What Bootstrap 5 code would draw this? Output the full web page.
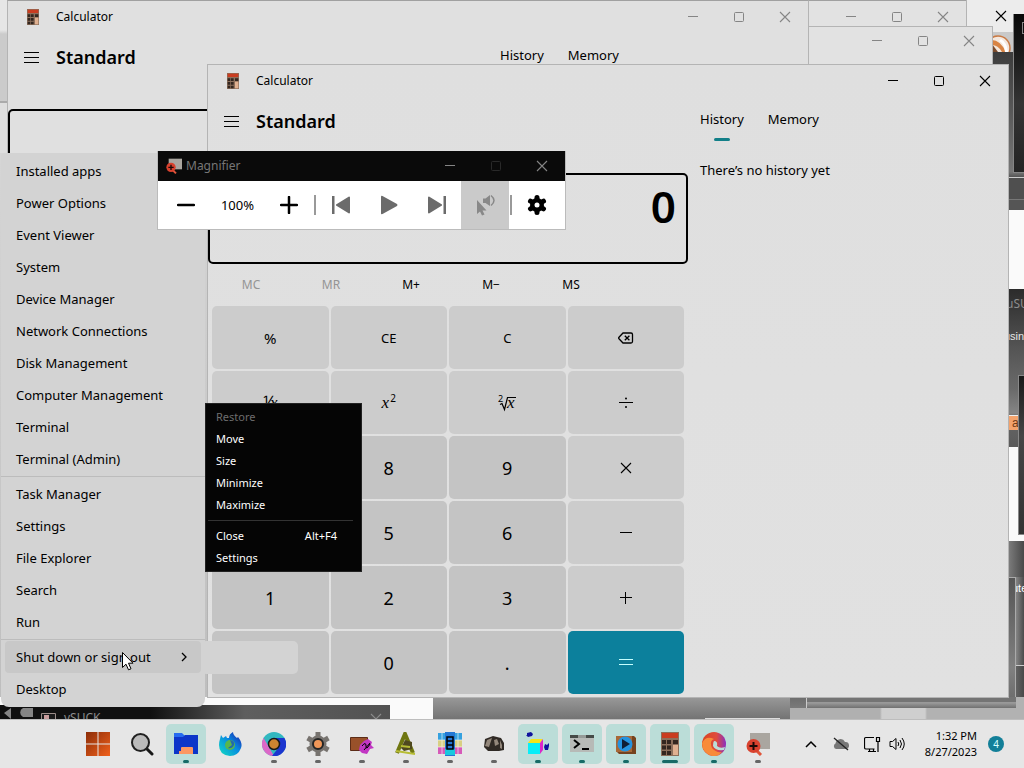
<!DOCTYPE html>
<html lang="en">
<head>
<meta charset="utf-8">
<meta name="viewport" content="width=device-width, initial-scale=1">
<title>Desktop</title>
<link href="https://cdn.jsdelivr.net/npm/bootstrap@5.3.0/dist/css/bootstrap.min.css" rel="stylesheet">
<style>
  body { font-family: "Noto Sans", "Open Sans", sans-serif; font-size: 13px; line-height: 18px; color: #000; background: #707070; }
  button { font: inherit; color: inherit; border: 0; background: none; padding: 0; }
  svg { display: block; flex: none; }
  .ink { fill: none; stroke: currentColor; }

  .desktop { background: linear-gradient(#dcdcdc, #bdbdbd); }
  .pane { position: absolute; }
  .window { position: absolute; background: #e0e0e0; border: 1px solid #b4b4b4; }
  .titlebar { height: 32px; }
  .win-name { font-size: 12px; }
  .win-btn { width: 46px; height: 32px; display: flex; align-items: center; justify-content: center; }
  .inactive .win-btn { color: #858585; }

  /* windows behind the calculators */
  .edge-strip { left: 0; top: 0; width: 8px; height: 153px; background: linear-gradient(#e6e6e6 0 30px, #cbcbcb 34px 101px, #aaa 101px 103px, #dedede 103px); }
  .ghost-a { left: 808px; top: -2px; width: 159px; height: 40px; background: #e2e2e2; }
  .ghost-a .inner-top { border-top: 1px solid #a0a0a0; margin-top: 1px; }
  .ghost-b { left: 808px; top: 26px; width: 185px; height: 50px; background: #e2e2e2; }
  .ghost-b .win-btn { height: 28px; }
  .right-top { left: 967px; top: 0; right: 0; height: 32px; background: #ececec; }
  .right-logo { left: 992px; top: 32px; width: 21px; height: 20px; background: #c9c9c9; overflow: hidden; }
  .right-dark { left: 992px; top: 52px; right: 0; height: 158px; background: linear-gradient(#3c3c3c, #777 120px, #555 125px, #686868); }
  .right-black { left: 1013px; top: 14px; right: 0; height: 159px; background: linear-gradient(#080808, #343434 90px, #242424); border: 1px solid #858585; border-right: 0; border-top: 0; overflow: hidden; }
  .right-box { width: 16px; height: 12px; margin: 8px 0 0 8px; border: 1px solid #888; }
  .right-black2 { left: 1008px; top: 177px; right: 0; height: 33px; background: linear-gradient(#4f4f4f 0 21px, #777 21px 22px, #555 22px); border-top: 1px solid #ccc; }
  .right-white { left: 1008px; top: 210px; right: 0; height: 331px; background: #fafafa; }
  .right-term { left: 1008px; top: 289px; right: 0; height: 158px; background: linear-gradient(#2b2b2b, #555 60px, #6a6a6a 100px, #858585 124px, #666 128px, #5a5a5a); color: #e6e6e6; overflow: hidden; white-space: nowrap; }
  .right-term .dim { color: #8d8d8d; font-size: 12px; margin-top: 6px; margin-left: -2px; }
  .right-term .lit { font: 11px/16px "Liberation Sans", sans-serif; margin-top: 15px; margin-left: -4px; }
  .right-tag { left: 1008px; top: 415px; width: 11px; height: 15px; background: #f3a36d; color: #6f3a16; border-top: 1px solid #eee; font: 12px/14px "Liberation Sans", sans-serif; padding-left: 4px; overflow: hidden; }
  .right-slab { left: 1018px; top: 375px; right: 0; height: 160px; background: linear-gradient(#191919, #454545 60px, #333); border: 1px solid #888; border-right: 0; }
  .right-low { left: 1008px; top: 541px; right: 0; height: 156px; background: linear-gradient(90deg, #7e7e7e, #484848); }
  .right-frame { left: 790px; top: 577px; right: 8px; height: 131px; background: linear-gradient(#555, #808080 90px, #6e6e6e 120px, #7a7a7a); border-top: 1px solid #aaa; border-right: 1px solid #aaa; }
  .right-note { left: 1016px; top: 577px; right: 0; height: 89px; border-bottom: 1px solid #ccc; color: #fff; font: 11px/16px "Liberation Sans", sans-serif; padding-top: 3px; overflow: hidden; background: linear-gradient(90deg, #858585, #4b4b4b); }
  .right-note span { margin-left: -4px; }
  .bottom-strip { left: 0; right: 0; top: 697px; bottom: 0; background: linear-gradient(90deg, #fafafa 0 433px, #8a8a8a 433px 790px, #b0b0b0 790px 880px, #cfcfcf 882px 925px, #b2b2b2 927px); }
  .bottom-haze { left: 433px; width: 357px; top: 697px; bottom: 0; background: linear-gradient(#999, #727272); }
  .bottom-box { left: 705px; width: 75px; top: 718px; bottom: 0; border: 1px solid #ddd; border-bottom: 0; }
  .bottom-frame { left: 806px; right: 8px; top: 697px; height: 11px; background: linear-gradient(#747474 0 5px, #999 5px 6px, #707070); border-left: 1px solid #ccc; }
  .bottom-app { left: 0; width: 390px; top: 705px; bottom: 0; background: linear-gradient(90deg, #101010 150px, #5e5e5e 245px, #525252); overflow: hidden; color: #8c8c8c; font-size: 12px; }

  /* calculator */
  .calc { width: 802px; }
  .calc-back { left: 7px; top: 0; height: 200px; border-top-color: #a0a0a0; }
  .calc-front { left: 207px; top: 64px; background: linear-gradient(#dfdfdf, #e1e1e1); }
  .calc-left { width: 480px; }
  .app-icon { margin-left: 17px; margin-right: 15px; }
  .mode-row { height: 48px; }
  .mode-name { font-size: 18px; line-height: 24px; font-weight: 600; }
  .display-box { display: block; width: 480px; height: 91px; margin-top: 28px; border: 2px solid #000; border-radius: 5px; background: transparent; font-size: 44px; line-height: 60px; font-weight: 600; text-align: right; padding: 1px 10px 26px; color: #000; }
  .mem-row { padding: 5px 3px 0; }
  .mem-row button { width: 80px; height: 32px; font-size: 12px; }
  .mem-row button:disabled { color: #949494; }
  .keypad { display: grid; grid-template-columns: repeat(4, 1fr); grid-auto-rows: 63px; gap: 2px; padding: 5px 4px 3px; }
  .key { background: #ccc; border-radius: 5px; display: flex; align-items: center; justify-content: center; font-size: 13px; }
  .key-percent { font-size: 15px; }
  .digit { background: #c4c4c4; font-size: 18px; }
  .key-equal { background: #0c809c; color: #c5ffff; }
  .maths { font: italic 17px/18px "Liberation Serif", serif; }
  .maths sup { font: 10px "Noto Sans", sans-serif; top: -6px; margin-left: 1px; }
  .tabs-row { padding-left: 12px; height: 48px; gap: 24px; }
  .tab-btn { position: relative; height: 44px; }
  .tab-btn.picked::after { content: ""; position: absolute; left: 14px; right: 14px; bottom: 0; height: 3px; border-radius: 2px; background: #127f88; }
  .history-note { padding: 16px 12px; }

  /* magnifier */
  .magnifier { left: 157px; top: 151px; width: 409px; background: #fff; border: 1px solid #bbb; border-top: 0; z-index: 3; }
  .magnifier .titlebar { height: 30px; background: #0a0a0a; color: #767676; }
  .magnifier .win-btn { height: 30px; color: #858585; }
  .tool-row { height: 48px; padding: 0 4px; }
  .tool-btn { width: 48px; height: 48px; display: flex; align-items: center; justify-content: center; }
  .tool-btn.stuck { background: #cacaca; }
  .tool-sep { width: 2px; height: 20px; background: #999; margin: 0 1px; }
  .muted { color: #6b6b6b; }

  /* start context menu */
  .start-menu { left: 1px; top: 153px; width: 204px; padding: 2px 4px; background: #d3d3d3; border-radius: 3px 3px 8px 8px; }
  .start-menu button { display: flex; align-items: center; width: 100%; height: 32px; padding: 0 11px; border-radius: 4px; text-align: left; }
  .start-menu .hot { background: #c8c8c8; }
  .menu-line { height: 3px; margin: 0 -4px; border: 0; opacity: 1; background: linear-gradient(transparent 1px, #bcbcbc 1px 2px, transparent 2px); }
  .flyout { left: 201px; top: 641px; width: 97px; height: 33px; background: #d3d3d3; border-radius: 5px; }

  .sys-menu { left: 205px; top: 403px; width: 157px; padding: 2px 0; background: #050505; color: #fff; border: 1px solid #222; }
  .sys-menu button { display: flex; width: 100%; height: 22px; align-items: center; justify-content: space-between; padding: 0 24px 0 10px; font-size: 11px; }
  .sys-menu button:disabled { color: #6d6d6d; }
  .sys-line { height: 1px; margin: 4px 8px 4px 2px; border: 0; background: #333; opacity: 1; }
  .cursor { left: 121px; top: 651px; }

  /* taskbar */
  .taskbar { height: 48px; background: #e6e6e6; box-shadow: 0 -1px #bdbdbd; padding-left: 78px; padding-right: 20px; position: relative; }
  .task-btn { position: relative; width: 40px; height: 40px; display: flex; align-items: center; justify-content: center; border-radius: 5px; }
  .task-btn.open { background: #bbddd8; }
  .task-btn.run::after { content: ""; position: absolute; left: 17px; bottom: 1px; width: 6px; height: 3px; border-radius: 2px; background: #666; }
  .task-btn.open::after { background: #176b67; }
  .task-btn.focus-app::after { left: 12px; width: 16px; }
  .tray-icon { margin-right: 15px; }
  .clock { font-size: 11px; line-height: 16px; width: 72px; margin-right: 11px; }
  .count { width: 16px; height: 16px; border-radius: 50%; background: #127f98; color: #d8ffff; font-size: 10px; line-height: 16px; }
</style>
</head>
<body class="vh-100 d-flex flex-column overflow-hidden">

<svg width="0" height="0" class="position-absolute" aria-hidden="true">
  <symbol id="i-min" viewBox="0 0 12 12"><path class="ink" d="M1 5.5h10"/></symbol>
  <symbol id="i-max" viewBox="0 0 12 12"><rect class="ink" x="1.5" y="1.5" width="9" height="9" rx="1"/></symbol>
  <symbol id="i-x" viewBox="0 0 12 12"><path class="ink" d="M1 1l10 10M11 1L1 11" stroke-width="1.1"/></symbol>
  <symbol id="i-burger" viewBox="0 0 16 12"><path class="ink" d="M0 1.500h15M0 6.500h15M0 11.500h15" stroke="#333"/></symbol>
  <symbol id="i-calc" viewBox="0 0 24 24">
    <path fill="#8c6f5b" d="M3 0h18v24H3z"/><path fill="#c93c20" d="M4 1h16v5H4z"/><path fill="#e0b090" d="M15 13h5v10h-5z"/>
    <path fill="#33261f" d="M4 8h4v4H4zm5 0h4v4H9zm6 0h5v4h-5zM4 13.500h4v4H4zm5 0h4v4H9zM4 19h4v4H4zm5 0h4v4H9z"/>
  </symbol>
  <symbol id="i-magapp" viewBox="0 0 24 24">
    <path fill="#aaa6a0" d="M4 1h20v16H4z"/><path d="M9 17l6 6" stroke="#e0553a" stroke-width="3"/><circle cx="7.500" cy="14" r="7" fill="#d8412e"/><path d="M3.500 14h8M7.500 10v8" stroke="#1a0806" stroke-width="2"/>
  </symbol>
</svg>

<main class="desktop position-relative flex-grow-1 overflow-hidden">
  <div class="pane edge-strip"></div>
  <div class="pane right-top d-flex justify-content-end"><button class="win-btn" aria-label="Close"><svg width="12" height="12"><use href="#i-x"/></svg></button></div>
  <div class="pane right-dark"></div>
  <div class="pane right-logo"><svg width="21" height="20" viewBox="0 0 21 20"><circle cx="6" cy="16" r="12" fill="#f4e8de" stroke="#c97a45" stroke-width="1.500"/><path d="M0 8q8 0 14 12h-4Q6 13 0 13z" fill="#d88444"/><path d="M9 7q6 3 7 13h-3Q12 11 7 9z" fill="#fff"/><path d="M0 12l6 8H0z" fill="#7a4a2b"/></svg></div>
  <div class="pane right-black"><div class="right-box"></div></div>
  <div class="pane right-black2"></div>
  <div class="pane right-white"></div>
  <div class="pane right-term"><div class="dim">uSUCK</div><div class="lit">using</div></div>
  <div class="pane right-tag">a</div>
  <div class="pane right-slab"></div>
  <div class="pane right-low"></div>
  <div class="pane bottom-strip"></div>
  <div class="pane bottom-haze"></div>
  <div class="pane bottom-box"></div>
  <div class="pane right-frame"></div>
  <div class="pane right-note"><span>ute</span></div>
  <div class="pane bottom-frame"></div>
  <div class="pane bottom-app d-flex align-items-start">
    <svg width="60" height="15" viewBox="0 0 60 15"><path fill="#858585" d="M4 8l7-5v11zM23 3h10v9H23a5 5 0 0 1 0-9z"/><path fill="#1b1b1b" stroke="#9b8c88" d="M41.500 8.500h14v7h-14z"/><path fill="#c89c9c" d="M44 10h5v5h-5z"/></svg>
    <span class="flex-grow-1 ps-1 pt-1">vSUCK</span>
    <svg class="mt-2 me-2" width="12" height="12"><use href="#i-x"/></svg>
  </div>

  <section class="window ghost-a inactive">
    <div class="inner-top d-flex justify-content-end"><button class="win-btn" aria-label="Minimize"><svg width="12" height="12"><use href="#i-min"/></svg></button><button class="win-btn" aria-label="Maximize"><svg width="12" height="12"><use href="#i-max"/></svg></button><button class="win-btn" aria-label="Close"><svg width="12" height="12"><use href="#i-x"/></svg></button></div>
  </section>
  <section class="window ghost-b inactive">
    <div class="d-flex justify-content-end"><button class="win-btn" aria-label="Minimize"><svg width="12" height="12"><use href="#i-min"/></svg></button><button class="win-btn" aria-label="Maximize"><svg width="12" height="12"><use href="#i-max"/></svg></button><button class="win-btn" aria-label="Close"><svg width="12" height="12"><use href="#i-x"/></svg></button></div>
  </section>

  <section class="window calc calc-back inactive">
    <div class="titlebar d-flex align-items-center">
      <svg class="app-icon" width="16" height="16"><use href="#i-calc"/></svg>
      <span class="win-name flex-grow-1">Calculator</span>
      <button class="win-btn" aria-label="Minimize"><svg width="12" height="12"><use href="#i-min"/></svg></button><button class="win-btn" aria-label="Maximize"><svg width="12" height="12"><use href="#i-max"/></svg></button><button class="win-btn" aria-label="Close"><svg width="12" height="12"><use href="#i-x"/></svg></button>
    </div>
    <div class="d-flex">
      <div class="calc-left">
        <div class="mode-row d-flex align-items-center ps-3"><button aria-label="Menu"><svg width="16" height="12"><use href="#i-burger"/></svg></button><span class="mode-name ms-3">Standard</span></div>
        <output class="display-box"></output>
      </div>
      <div class="flex-grow-1"><div class="tabs-row d-flex"><button class="tab-btn">History</button><button class="tab-btn">Memory</button></div></div>
    </div>
  </section>

  <section class="window calc calc-front">
    <div class="titlebar d-flex align-items-center">
      <svg class="app-icon" width="16" height="16"><use href="#i-calc"/></svg>
      <span class="win-name flex-grow-1">Calculator</span>
      <button class="win-btn" aria-label="Minimize"><svg width="12" height="12"><use href="#i-min"/></svg></button><button class="win-btn" aria-label="Maximize"><svg width="12" height="12"><use href="#i-max"/></svg></button><button class="win-btn" aria-label="Close"><svg width="12" height="12"><use href="#i-x"/></svg></button>
    </div>
    <div class="d-flex">
      <div class="calc-left">
        <div class="mode-row d-flex align-items-center ps-3"><button aria-label="Menu"><svg width="16" height="12"><use href="#i-burger"/></svg></button><span class="mode-name ms-3">Standard</span></div>
        <output class="display-box">0</output>
        <div class="mem-row d-flex"><button disabled>MC</button><button disabled>MR</button><button>M+</button><button>M−</button><button>MS</button></div>
        <div class="keypad">
          <button class="key key-percent">%</button><button class="key">CE</button><button class="key">C</button>
          <button class="key" aria-label="Backspace"><svg width="16" height="12" viewBox="0 0 16 12"><path class="ink" d="M5 1h8q1.500 0 1.500 1.500v7Q14.500 11 13 11H5L1 6.800q-.7-.8 0-1.600zM6.800 3.700l4.600 4.600M11.400 3.700L6.800 8.300" stroke-width="1.300"/></svg></button>
          <button class="key"><span class="maths"><span class="fst-normal">⅟</span>x</span></button>
          <button class="key"><span class="maths">x<sup>2</sup></span></button>
          <button class="key" aria-label="Square root"><svg width="18" height="18" viewBox="0 0 18 18"><path class="ink" d="M2 10.500l2-1 2.500 6L9.500 3.500H18" stroke-width="1.200"/><text x="0" y="8" font-size="9" font-family="Noto Sans">2</text><text x="9" y="14" font-size="17" font-style="italic" font-family="Liberation Serif">x</text></svg></button>
          <button class="key" aria-label="Divide"><svg width="16" height="16" viewBox="0 0 16 16"><path class="ink" d="M1 7.500h14"/><circle cx="8" cy="3.500" r="1"/><circle cx="8" cy="12" r="1"/></svg></button>
          <button class="key digit">7</button><button class="key digit">8</button><button class="key digit">9</button>
          <button class="key" aria-label="Multiply"><svg width="12" height="12"><use href="#i-x"/></svg></button>
          <button class="key digit">4</button><button class="key digit">5</button><button class="key digit">6</button>
          <button class="key" aria-label="Minus"><svg width="12" height="12" viewBox="0 0 12 12"><path class="ink" d="M0 5.500h12"/></svg></button>
          <button class="key digit">1</button><button class="key digit">2</button><button class="key digit">3</button>
          <button class="key" aria-label="Plus"><svg width="12" height="12" viewBox="0 0 12 12"><path class="ink" d="M0 5.500h12M5.500 0v12"/></svg></button>
          <button class="key digit" aria-label="Plus minus"></button><button class="key digit">0</button><button class="key digit">.</button>
          <button class="key key-equal" aria-label="Equals"><svg width="14" height="12" viewBox="0 0 14 12"><path class="ink" d="M0 2.500h14M0 7.500h14"/></svg></button>
        </div>
      </div>
      <div class="flex-grow-1">
        <div class="tabs-row d-flex"><button class="tab-btn picked">History</button><button class="tab-btn">Memory</button></div>
        <div class="history-note">There’s no history yet</div>
      </div>
    </div>
  </section>

  <div class="pane flyout"></div>

  <section class="window magnifier">
    <div class="titlebar d-flex align-items-center">
      <svg class="ms-2 me-1" width="16" height="16"><use href="#i-magapp"/></svg>
      <span class="win-name flex-grow-1">Magnifier</span>
      <button class="win-btn" aria-label="Minimize"><svg width="12" height="12"><use href="#i-min"/></svg></button><button class="win-btn" disabled aria-label="Maximize"><svg width="12" height="12" opacity=".25"><use href="#i-max"/></svg></button><button class="win-btn" aria-label="Close"><svg width="12" height="12"><use href="#i-x"/></svg></button>
    </div>
    <div class="tool-row d-flex align-items-center">
      <button class="tool-btn" aria-label="Zoom out"><svg width="18" height="18" viewBox="0 0 18 18"><path d="M1 9h16" stroke="#000" stroke-width="2.500" stroke-linecap="round"/></svg></button>
      <span class="flex-grow-1 text-center">100%</span>
      <button class="tool-btn" aria-label="Zoom in"><svg width="18" height="18" viewBox="0 0 18 18"><path d="M1 9h16M9 1v16" stroke="#000" stroke-width="2.500" stroke-linecap="round"/></svg></button>
      <span class="tool-sep"></span>
      <button class="tool-btn muted" aria-label="Previous"><svg width="20" height="20" viewBox="0 0 20 20"><path fill="currentColor" d="M1 1h2.500v18H1zM18 1.500q1 0 1 1v15q0 1-1 1L5 10.500v-1z"/></svg></button>
      <button class="tool-btn muted" aria-label="Play"><svg width="20" height="20" viewBox="0 0 20 20"><path fill="currentColor" d="M2 1.500q0-1 1.500-.5L18 9q1 1 0 2L3.500 19q-1.500.5-1.500-.5z"/></svg></button>
      <button class="tool-btn muted" aria-label="Next"><svg width="20" height="20" viewBox="0 0 20 20"><path fill="currentColor" d="M16.500 1H19v18h-2.500zM2 1.500L15 9.500v1L2 18.500q-1 0-1-1v-15q0-1 1-1z"/></svg></button>
      <button class="tool-btn stuck" aria-label="Read from here"><svg width="20" height="22" viewBox="0 0 20 22"><path fill="#888" d="M2 6v14l3-2.500 2 4 2.500-1-2-4h4zM8 4.500h2.500L15 1v11l-4.500-3H8z"/><path d="M16 1.500q6 5 0 10" fill="none" stroke="#888" stroke-width="1.500"/></svg></button>
      <span class="tool-sep"></span>
      <button class="tool-btn" aria-label="Settings"><svg width="20" height="20" viewBox="0 0 20 20"><path d="M10 2.500v15M3.500 6.200l13 7.600M16.500 6.200l-13 7.600" stroke="#000" stroke-linecap="round" stroke-width="5"/><circle cx="10" cy="10" r="7"/><circle cx="10" cy="10" r="2.500" fill="#fff"/></svg></button>
    </div>
  </section>

  <nav class="pane start-menu" aria-label="Start context menu">
    <button>Installed apps</button><button>Power Options</button><button>Event Viewer</button><button>System</button><button>Device Manager</button><button>Network Connections</button><button>Disk Management</button><button>Computer Management</button><button>Terminal</button><button>Terminal (Admin)</button>
    <hr class="menu-line">
    <button>Task Manager</button><button>Settings</button><button>File Explorer</button><button>Search</button><button>Run</button>
    <hr class="menu-line">
    <button class="hot justify-content-between">Shut down or sign out<svg width="12" height="12" viewBox="0 0 12 12"><path class="ink" d="M4 2l4 4-4 4" stroke-width="1.300"/></svg></button><button>Desktop</button>
  </nav>

  <nav class="pane sys-menu" aria-label="Window menu">
    <button disabled>Restore</button><button>Move</button><button>Size</button><button>Minimize</button><button>Maximize</button>
    <hr class="sys-line">
    <button>Close<span>Alt+F4</span></button><button>Settings</button>
  </nav>

  <svg class="pane cursor" width="13" height="20" viewBox="0 0 13 20"><path d="M1.500 1.500v15l3.500-3.300 2.500 5.600 2.500-1-2.500-5.600h4.500z" fill="#fff" stroke="#000"/></svg>
</main>

<footer class="taskbar d-flex align-items-center justify-content-between">
  <div class="d-flex gap-1">
    <button class="task-btn" aria-label="Start"><svg width="24" height="24" viewBox="0 0 24 24"><defs><linearGradient id="g1" x1="0" y1="0" x2="1" y2="1"><stop offset="0" stop-color="#8c2d08"/><stop offset="1" stop-color="#f0611c"/></linearGradient></defs><path fill="url(#g1)" d="M0 0h11.500v11.500H0zm12.500 0H24v11.500H12.500zM0 12.500h11.500V24H0zm12.500 0H24V24H12.500z"/></svg></button>
    <button class="task-btn" aria-label="Search"><svg width="24" height="24" viewBox="0 0 24 24"><path d="M16 16l6 6" stroke="#181818" stroke-width="3" stroke-linecap="round"/><circle cx="10.500" cy="10.500" r="8.500" fill="#bbb" stroke="#202020" stroke-width="2"/></svg></button>
    <button class="task-btn open run" aria-label="File Explorer"><svg width="24" height="24" viewBox="0 0 24 24"><path fill="#256cf0" d="M0 1h8l3 3v4H0z"/><path fill="#0b36c9" d="M0 5h9l2-2h13v19H0z"/><path fill="#fb9762" d="M7 16q0-1 1-1h10q1 0 1 1v6H5v-3h2z"/></svg></button>
    <button class="task-btn" aria-label="Firefox"><svg width="24" height="24" viewBox="0 0 24 24"><defs><linearGradient id="g2" x1="1" y1="0" x2="0" y2="1"><stop offset="0" stop-color="#2018a8"/><stop offset=".45" stop-color="#078be0"/><stop offset="1" stop-color="#13dfc0"/></linearGradient></defs><path fill="url(#g2)" d="M2 7l1-4 2 3 3-2 1 2 2 0q0-4 4-6 0 3 4 6l1-1q5 6 3 11-3 8-11 8Q1 23 1 13q0-3 1-6z"/><circle cx="12" cy="13" r="5" fill="#59b64b"/><path d="M12 8q5 1 4 5-2 4-6 3l4-3z" fill="#2468ae"/></svg></button>
    <button class="task-btn run" aria-label="Chrome"><svg width="24" height="24" viewBox="0 0 24 24"><circle cx="12" cy="12" r="12" fill="#33b8c0"/><path fill="#dc68c8" d="M1.600 6L12 24A12 12 0 0 1 1.600 6z"/><path fill="#1b35cf" d="M22.400 6A12 12 0 0 1 10 24l7-9-5-9z"/><circle cx="12" cy="12" r="5.500" fill="#cc8430" stroke="#181818" stroke-width="1.500"/></svg></button>
    <button class="task-btn run" aria-label="Settings"><svg width="24" height="24" viewBox="0 0 24 24"><path d="M12 0v24M1.600 6l20.800 12M22.400 6L1.600 18" stroke="#77736f" stroke-width="5"/><circle cx="12" cy="12" r="8.500" fill="#77736f"/><circle cx="12" cy="12" r="5" fill="#ef9658" stroke="#252525" stroke-width="2"/></svg></button>
    <button class="task-btn run" aria-label="Paint tool"><svg width="24" height="24" viewBox="0 0 24 24"><path fill="#99512a" stroke="#5c2d17" d="M.5 5.500h17v13H.5z"/><path fill="#c136c3" d="M10 13l4-4 4-2 4 3-1 3 3 3-4 1-3 5-5-1-3-3z"/><path class="ink" d="M12 14q4-5 4 0t4-2M14 18l6-7" stroke="#f587e8"/></svg></button>
    <button class="task-btn run" aria-label="Design tool"><svg width="24" height="24" viewBox="0 0 24 24"><path d="M3 21L11 2l8 19" fill="none" stroke="#6f7611" stroke-width="4"/><path fill="#4f491f" d="M11 8l7 2v7l-8 2-3-3z"/><path d="M2 19l19 3M7 14l9 1" stroke="#b7bd35" stroke-width="2"/></svg></button>
    <button class="task-btn run" aria-label="Archive tool"><svg width="24" height="24" viewBox="0 0 24 24"><path fill="#35a1df" d="M0 1h24v7H0z"/><path fill="#d8cf83" d="M0 8h24v7H0z"/><path fill="#d65ab9" d="M0 15h24v7H0z"/><path fill="#2377d4" d="M7 0h10v24H7z"/><path fill="#1ac8de" d="M7 17h10v6H7z"/><path class="ink" d="M9 5h6v12H9zm0 4h6M9 13h6" stroke="#101820" stroke-width="1.500"/><path d="M4 1v21M20 1v21M0 8h7M17 8h7M0 15h7M17 15h7" stroke="#fff" opacity=".6"/></svg></button>
    <button class="task-btn run" aria-label="Game"><svg width="24" height="24" viewBox="0 0 24 24"><path fill="#302a25" d="M3 7l8-3 8 2 3 5v7l-5 1H6l-4-4z"/><path fill="#93877b" d="M5 8l5-2-3 9-4-1zm7 0l3-1 2 5-4 2zM18 8l2 5v4l-2-1z"/></svg></button>
    <button class="task-btn open run" aria-label="Registry"><svg width="24" height="24" viewBox="0 0 24 24"><path fill="#07eef8" d="M2 11h12v11H2z"/><path fill="#f3e51c" d="M2 11l3-4h12l-3 4z"/><path fill="#dd26ca" d="M14 11l3-4v11l-3 4z"/><path fill="#10139d" d="M1 1l4-1 2 2-1 2-4 1-2-2H1zm18 11l2 1 2-2v3l-1 4-3 0-1-3z"/></svg></button>
    <button class="task-btn open run" aria-label="Terminal"><svg width="24" height="24" viewBox="0 0 24 24"><path fill="#b7bab7" d="M0 3h24v17H0z"/><path fill="#464b48" d="M0 3h24v3H0z"/><path fill="#969b98" d="M8 3h8v3H8z"/><path class="ink" d="M4 8l5 4-5 4M12 17h7" stroke="#171917" stroke-width="2"/></svg></button>
    <button class="task-btn open run" aria-label="Media player"><svg width="24" height="24" viewBox="0 0 24 24"><path fill="#76431f" d="M2 4h18l2 2v16H5l-3-3z"/><path fill="#a86838" d="M2 4h16v16H2z"/><circle cx="11" cy="12" r="7.500" fill="#2693df"/><path fill="#101d35" d="M8 7l8 5-8 5z"/></svg></button>
    <button class="task-btn open run focus-app" aria-label="Calculator"><svg width="24" height="24"><use href="#i-calc"/></svg></button>
    <button class="task-btn open run" aria-label="Edge"><svg width="24" height="24" viewBox="0 0 24 24"><defs><linearGradient id="g3"><stop offset="0" stop-color="#d84623"/><stop offset=".6" stop-color="#e04b3c"/><stop offset="1" stop-color="#8b2fc0"/></linearGradient></defs><circle cx="12" cy="12" r="12" fill="url(#g3)"/><path fill="#f88b3a" d="M0 11q4-8 12-4-5 2-2 9 4 5 10 4-4 5-10 4Q0 21 0 11z"/><path fill="#bbddd8" d="M12 9q4 0 3 5 3 3 8 1l-1 3q-9 1-11-4 0-4 1-5z"/></svg></button>
    <button class="task-btn run" aria-label="Magnifier"><svg width="24" height="24"><use href="#i-magapp"/></svg></button>
  </div>
  <div class="d-flex align-items-center">
    <button class="me-3" aria-label="Show hidden icons"><svg width="12" height="8" viewBox="0 0 12 8"><path class="ink" d="M1 7l5-5 5 5" stroke-width="1.500"/></svg></button>
    <button class="tray-icon" aria-label="OneDrive"><svg width="16" height="14" viewBox="0 0 16 14"><path fill="#777" d="M3 12a3 3 0 0 1-.5-5.500A5 5 0 0 1 12 5a3.500 3.500 0 0 1 1 7z"/><path d="M1 1l14 12" stroke="#222" stroke-width="1.300"/></svg></button>
    <button class="me-2" aria-label="Network"><svg width="17" height="17" viewBox="0 0 17 17"><path class="ink" d="M10 1.500H2q-1.500 0-1.500 1.500v8.500Q.5 13 2 13h8.500M4 15.500h8M5.500 13v2.500M9.500 13v2.500M12.500 1.500h3v4h-3zM14 5.500V16" stroke-width="1.200"/></svg></button>
    <button aria-label="Volume"><svg width="16" height="14" viewBox="0 0 16 14"><path class="ink" d="M1 4.500h2.500L7 1.500v11L3.500 9.500H1zM9 5q1.500 2 0 4M11 3q3 4 0 8M13 1q4.500 6 0 12"/></svg></button>
    <time class="clock text-end">1:32 PM<br>8/27/2023</time>
    <span class="count text-center">4</span>
  </div>
</footer>
<script src="https://cdn.jsdelivr.net/npm/bootstrap@5.3.0/dist/js/bootstrap.bundle.min.js"></script>
</body>
</html>
